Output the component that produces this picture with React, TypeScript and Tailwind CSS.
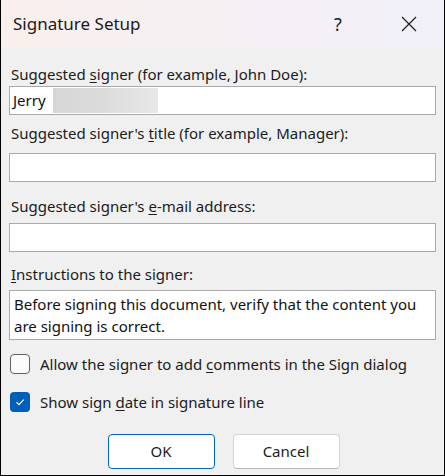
import React from "react";

const font = { fontFamily: '"Noto Sans", "Open Sans", sans-serif' };

function Label({ pre, k, post }: { pre: string; k: string; post: string }) {
  return (
    <div className="text-[15px] leading-[20px] text-[#1b1b1b]">
      {pre}
      <span className="underline underline-offset-2">{k}</span>
      {post}
    </div>
  );
}

function Field({ children }: { children?: React.ReactNode }) {
  return (
    <div className="h-[29px] bg-white border border-[#a9a9a9] flex items-center px-[2px] text-[15px] text-[#111]">
      {children}
    </div>
  );
}

export default function App() {
  return (
    <div
      className="w-[445px] h-[476px] bg-[#f0f0f0] border border-black border-t-0 flex flex-col overflow-hidden"
      style={font}
    >
      {/* title bar */}
      <div className="h-[48px] shrink-0 flex items-center bg-gradient-to-r from-[#f9efed] to-[#f1f0f9] pl-[12px]">
        <span className="text-[17px] text-[#1a1a1a] flex-1">Signature Setup</span>
        <span className="text-[18px] text-[#222] w-[30px] text-center mr-[48px]">?</span>
        <svg width="16" height="16" viewBox="0 0 16 16" className="mr-[27px]">
          <path d="M1 1L15 15M15 1L1 15" stroke="#222" strokeWidth="1.3" />
        </svg>
      </div>

      <div className="flex flex-col px-[8px] pt-[16px]">
        <div className="pl-[2px]">
          <Label pre="Suggested " k="s" post="igner (for example, John Doe):" />
        </div>
        <div className="mt-[2px]">
          <Field>
            <span className="pl-[1px]">Jerry</span>
            <span className="ml-[7px] h-[25px] w-[105px] bg-gradient-to-r from-[#d6d6d6] via-[#dcdcdc] to-[#e8e8e8]" />
          </Field>
        </div>

        <div className="pl-[2px] mt-[8px]">
          <Label pre="Suggested signer's " k="t" post="itle (for example, Manager):" />
        </div>
        <div className="mt-[10px]">
          <Field />
        </div>

        <div className="pl-[2px] mt-[14px]">
          <Label pre="Suggested signer's " k="e" post="-mail address:" />
        </div>
        <div className="mt-[7px]">
          <Field />
        </div>

        <div className="pl-[2px] mt-[12px]">
          <Label pre="" k="I" post="nstructions to the signer:" />
        </div>
        <div className="mt-[6px] h-[50px] bg-white border border-[#a9a9a9] px-[4px] pt-[2px] text-[15px] leading-[22px] text-[#111]">
          Before signing this document, verify that the content you are signing is correct.
        </div>

        <div className="flex items-center mt-[13px] pl-[1px]">
          <span className="w-[20px] h-[20px] rounded-[4px] border border-[#616161] bg-[#fafafa]" />
          <span className="ml-[10px] text-[15px] text-[#1b1b1b]">
            Allow the signer to add <span className="underline underline-offset-2">c</span>omments in the Sign dialog
          </span>
        </div>

        <div className="flex items-center mt-[15px] pl-[1px]">
          <span className="w-[20px] h-[20px] rounded-[4px] bg-[#005fb8] flex items-center justify-center">
            <svg width="12" height="12" viewBox="0 0 12 12">
              <path d="M2.5 6.3L5 8.6L9.7 3.6" fill="none" stroke="white" strokeWidth="1.2" />
            </svg>
          </span>
          <span className="ml-[10px] text-[15px] text-[#1b1b1b]">
            Show sign <span className="underline underline-offset-2">d</span>ate in signature line
          </span>
        </div>

        <div className="flex justify-center gap-[18px] mt-[21px] pl-[2px]">
          <button className="w-[107px] h-[35px] bg-white rounded-[4px] border border-[#0067c0] text-[15px] text-[#1b1b1b]">
            OK
          </button>
          <button className="w-[107px] h-[35px] bg-white rounded-[4px] border border-[#d4d4d4] border-b-[#b8b8b8] text-[15px] text-[#1b1b1b]">
            Cancel
          </button>
        </div>
      </div>
    </div>
  );
}
